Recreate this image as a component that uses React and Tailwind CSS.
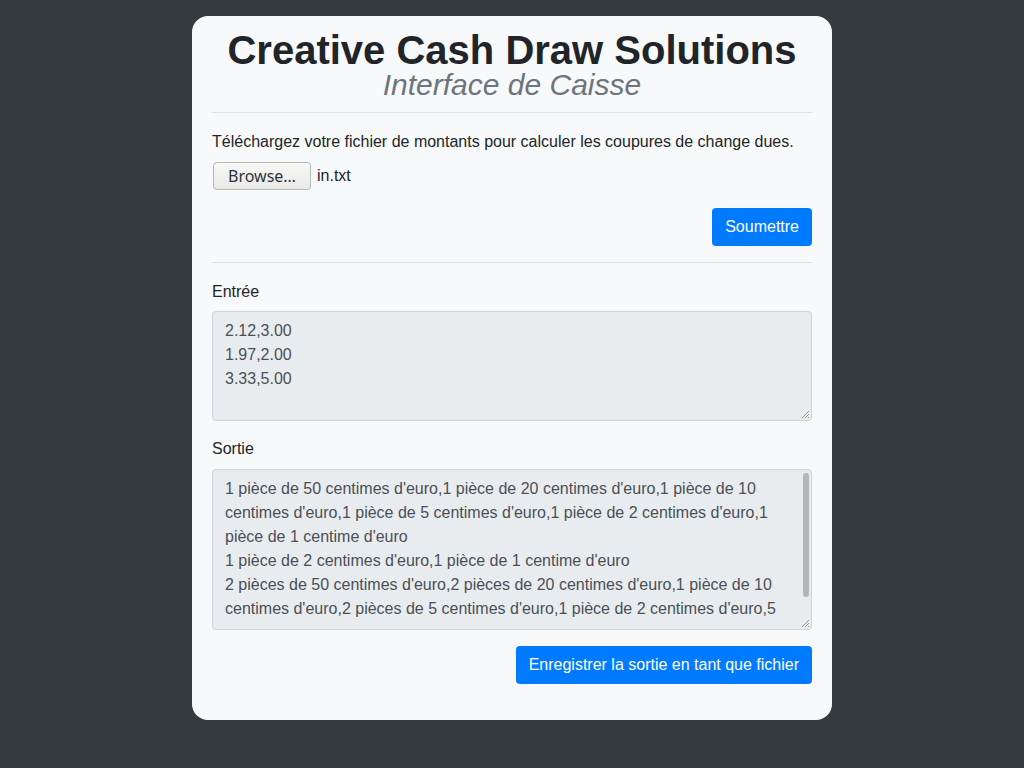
import React from 'react';

const inputLines = ['2.12,3.00', '1.97,2.00', '3.33,5.00'];

const outputLines = [
  "1 pièce de 50 centimes d'euro,1 pièce de 20 centimes d'euro,1 pièce de 10",
  "centimes d'euro,1 pièce de 5 centimes d'euro,1 pièce de 2 centimes d'euro,1",
  "pièce de 1 centime d'euro",
  "1 pièce de 2 centimes d'euro,1 pièce de 1 centime d'euro",
  "2 pièces de 50 centimes d'euro,2 pièces de 20 centimes d'euro,1 pièce de 10",
  "centimes d'euro,2 pièces de 5 centimes d'euro,1 pièce de 2 centimes d'euro,5",
];

// little diagonal grip drawn by the browser in the textarea corner
function ResizeGrip() {
  return (
    <svg className="absolute bottom-[1px] right-[1px]" width="9" height="9" viewBox="0 0 9 9">
      <path d="M8 1 L1 8 M8 4 L4 8 M8 7 L7 8" stroke="#9a9a9a" strokeWidth="1" />
    </svg>
  );
}

function TextBox({ lines, height, scroll }) {
  return (
    <div
      className="relative w-full rounded border border-[#ced4da] bg-[#e9ecef] px-3 pt-[7px] text-[16px] leading-6 text-[#495057]"
      style={{ height }}
    >
      <div className="whitespace-pre">
        {lines.map((l, i) => (
          <div key={i}>{l}</div>
        ))}
      </div>
      {scroll && (
        <div className="absolute right-[2px] top-[3px] h-[124px] w-[6px] rounded-full bg-[#b4b5b8]" />
      )}
      <ResizeGrip />
    </div>
  );
}

export default function App() {
  return (
    <div
      className="min-h-[768px] w-full bg-[#343a40] pt-4"
      style={{ fontFamily: '"Liberation Sans", Arial, sans-serif' }}
    >
      <div className="mx-auto w-[640px] rounded-2xl bg-[#f8f9fa] px-5 pb-9 pt-[14px] text-[#212529]">
        <div className="text-center">
          <h1 className="text-[40px] font-bold leading-[40px]">Creative Cash Draw Solutions</h1>
          <h2 className="text-[30px] italic leading-[30px] text-[#6c757d]">Interface de Caisse</h2>
        </div>

        <hr className="mt-3 border-t border-[#dfe1e3]" />

        <p className="mt-[17px] text-[16px] leading-6">
          Téléchargez votre fichier de montants pour calculer les coupures de change dues.
        </p>

        <div className="mt-2 flex items-center gap-[6px] pl-px">
          <div
            className="flex h-[28px] w-[98px] items-center justify-center rounded-[4px] border border-[#b6b6b3] bg-gradient-to-b from-[#f8f8f7] to-[#e9e9e7] text-[16px] text-[#2e3436]"
            style={{ fontFamily: '"Noto Sans", "DejaVu Sans", sans-serif' }}
          >
            Browse…
          </div>
          <span className="text-[16px]">in.txt</span>
        </div>

        <div className="mt-[18px] flex justify-end">
          <button className="h-[38px] rounded bg-[#007bff] px-[13px] text-[16px] text-white">Soumettre</button>
        </div>

        <hr className="mt-4 border-t border-[#dfe1e3]" />

        <label className="mt-[17px] block text-[16px] leading-6">Entrée</label>
        <div className="mt-[7px]">
          <TextBox lines={inputLines} height={110} />
        </div>

        <label className="mt-4 block text-[16px] leading-6">Sortie</label>
        <div className="mt-2">
          <TextBox lines={outputLines} height={161} scroll />
        </div>

        <div className="mt-4 flex justify-end">
          <button className="h-[38px] rounded bg-[#007bff] px-[13px] text-[16px] text-white">
            Enregistrer la sortie en tant que fichier
          </button>
        </div>
      </div>
    </div>
  );
}
